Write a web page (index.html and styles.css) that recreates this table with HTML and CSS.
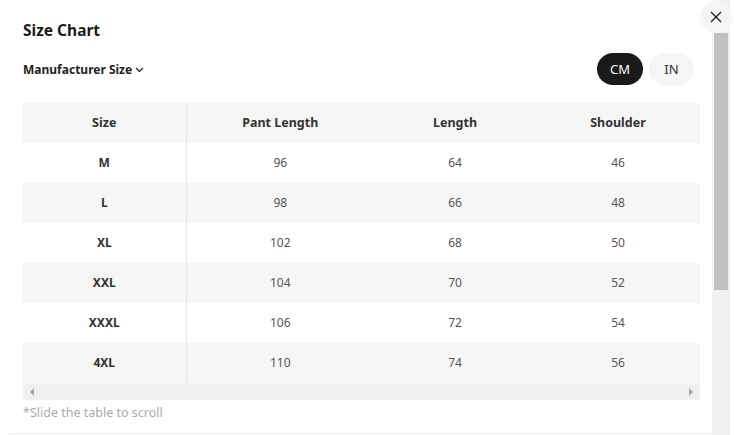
FILE: index.html
```html
<!DOCTYPE html>
<html lang="en">
<head>
<meta charset="utf-8">
<title>Size Chart</title>
<link rel="stylesheet" href="styles.css">
</head>
<body>
<div class="dialog">
  <div class="content">
    <h2 class="title">Size Chart</h2>
    <div class="toolbar">
      <button class="dropdown">Manufacturer Size
        <svg class="chev" width="9" height="6" viewBox="0 0 9 6"><path d="M1 1l3.5 3.5L8 1" fill="none" stroke="#222" stroke-width="1.2"/></svg>
      </button>
      <div class="units">
        <button class="unit active">CM</button>
        <button class="unit">IN</button>
      </div>
    </div>
    <div class="table-wrap">
      <table class="chart">
        <thead>
          <tr><th class="c1">Size</th><th class="c2">Pant Length</th><th class="c3">Length</th><th class="c4">Shoulder</th></tr>
        </thead>
        <tbody>
          <tr><td class="c1">M</td><td>96</td><td>64</td><td>46</td></tr>
          <tr><td class="c1">L</td><td>98</td><td>66</td><td>48</td></tr>
          <tr><td class="c1">XL</td><td>102</td><td>68</td><td>50</td></tr>
          <tr><td class="c1">XXL</td><td>104</td><td>70</td><td>52</td></tr>
          <tr><td class="c1">XXXL</td><td>106</td><td>72</td><td>54</td></tr>
          <tr><td class="c1">4XL</td><td>110</td><td>74</td><td>56</td></tr>
        </tbody>
      </table>
      <div class="hscroll">
        <span class="arrow left"></span>
        <span class="arrow right"></span>
      </div>
    </div>
    <p class="hint">*Slide the table to scroll</p>
  </div>
  <div class="vscroll"><div class="thumb"></div></div>
  <button class="close" aria-label="Close">
    <svg width="12" height="12" viewBox="0 0 12 12"><path d="M1 1l10 10M11 1L1 11" stroke="#222" stroke-width="1.4" fill="none"/></svg>
  </button>
</div>
</body>
</html>
```
FILE: styles.css
```css
* { box-sizing: border-box; }
html, body { margin: 0; padding: 0; background: #fff; }
body {
  font-family: "Noto Sans", "Open Sans", sans-serif;
  color: #222;
  width: 734px;
  height: 435px;
  overflow: hidden;
}
.dialog {
  position: relative;
  display: flex;
  width: 734px;
  height: 435px;
}
.content {
  width: 712px;
  padding: 19px 12px 0 23px;
  height: 435px;
  position: relative;
}
.content::after {
  content: "";
  position: absolute;
  left: 10px;
  right: 0;
  bottom: 1px;
  height: 1px;
  background: #ededed;
}
.title {
  margin: 0;
  font-size: 15.5px;
  line-height: 22px;
  font-weight: 700;
  color: #1a1a1a;
}
.toolbar {
  margin-top: 12px;
  height: 32px;
  display: flex;
  align-items: center;
  justify-content: space-between;
  padding-right: 6px;
}
.dropdown {
  border: 0;
  background: none;
  padding: 0;
  font: inherit;
  font-size: 12px;
  font-weight: 700;
  color: #222;
  display: flex;
  align-items: center;
  gap: 3px;
}
.chev { margin-top: 1px; }
.units { display: flex; gap: 6px; }
.unit {
  border: 0;
  font: inherit;
  font-size: 13px;
  height: 32px;
  width: 45px;
  border-radius: 16px;
  background: #f5f5f5;
  color: #333;
  padding: 0;
}
.unit.active { background: #1a1a1a; color: #fff; width: 46px; }
.table-wrap {
  margin-top: 18px;
  width: 677px;
}
.chart {
  width: 677px;
  border-collapse: collapse;
  table-layout: fixed;
}
.chart th, .chart td {
  height: 40px;
  padding: 0 0 1px;
  text-align: center;
  font-size: 12px;
}
.chart th { font-weight: 700; color: #333; font-size: 12.5px; }
.chart td { color: #555; }
.chart td.c1 { font-weight: 700; color: #333; }
.chart .c1 { width: 163px; border-right: 1px solid #e8e8e8; }
.chart .c2 { width: 188px; }
.chart .c3 { width: 162px; }
.chart .c4 { width: 164px; }
.chart thead tr, .chart tbody tr:nth-child(even) { background: #f6f6f6; }
.hscroll {
  height: 17px;
  background: #f1f1f1;
  display: flex;
  align-items: center;
  justify-content: space-between;
  padding: 0 6px;
}
.arrow { width: 0; height: 0; border-top: 4px solid transparent; border-bottom: 4px solid transparent; }
.arrow.left { border-right: 4px solid #a3a3a3; margin-left: 1px; }
.arrow.right { border-left: 4px solid #a3a3a3; margin-right: 1px; }
.hint {
  margin: 5px 0 0;
  font-size: 12.5px;
  line-height: 16px;
  color: #aaa;
}
.vscroll {
  width: 18px;
  height: 435px;
  background: #f1f1f1;
  padding: 33px 2px 0 2px;
}
.thumb { height: 257px; background: #c1c1c1; }
.close {
  position: absolute;
  left: 700px;
  top: 1px;
  width: 32px;
  height: 32px;
  border-radius: 50%;
  border: 0;
  background: #f5f5f5;
  display: flex;
  align-items: center;
  justify-content: center;
  padding: 0;
}
```
